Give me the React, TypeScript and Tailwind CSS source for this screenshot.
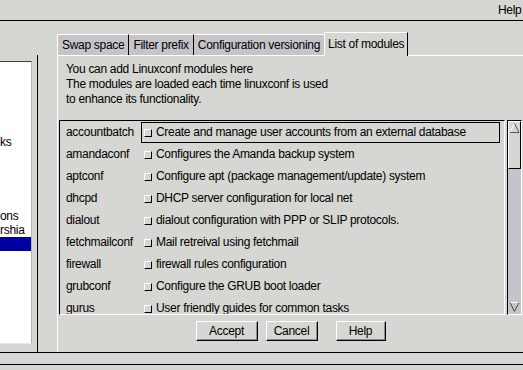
import React from 'react';

const MODULES = [
  { name: 'accountbatch', desc: 'Create and manage user accounts from an external database' },
  { name: 'amandaconf', desc: 'Configures the Amanda backup system' },
  { name: 'aptconf', desc: 'Configure apt (package management/update) system' },
  { name: 'dhcpd', desc: 'DHCP server configuration for local net' },
  { name: 'dialout', desc: 'dialout configuration with PPP or SLIP protocols.' },
  { name: 'fetchmailconf', desc: 'Mail retreival using fetchmail' },
  { name: 'firewall', desc: 'firewall rules configuration' },
  { name: 'grubconf', desc: 'Configure the GRUB boot loader' },
  { name: 'gurus', desc: 'User friendly guides for common tasks' },
];

const TABS = ['Swap space', 'Filter prefix', 'Configuration versioning'];

function Check() {
  return <span className="block w-[8px] h-[8px] shrink-0 bg-[#d6d6d2] border-t border-l border-white border-r border-b border-r-[#000] border-b-[#000]" />;
}

function Btn({ label, w, ml }: { label: string; w: string; ml: string }) {
  return (
    <button className={`${w} ${ml} h-[20px] bg-[#d6d6d2] border border-t-white border-l-white border-r-black border-b-black shadow-[inset_-1px_-1px_0_#8c8c8c] text-black flex items-center justify-center`}>
      {label}
    </button>
  );
}

export default function App() {
  return (
    <div className="w-[523px] h-[370px] overflow-hidden bg-[#d6d6d2] text-black text-[12px] leading-[15px] tracking-[-0.3px] font-['Liberation_Sans',Arial,sans-serif] flex flex-col">
      {/* menubar */}
      <div className="h-[21px] shrink-0 border-b border-black flex items-center pl-[498px] whitespace-nowrap">Help</div>

      <div className="h-[332px] shrink-0 border-b border-black flex">
        {/* left tree, scrolled */}
        <div className="w-[38px] shrink-0 mt-[34px] border-r border-black pt-[6px] pr-[5px] pb-[8px] flex flex-col">
          <div className="flex-1 bg-white border-t border-[#404040] border-r border-r-[#b4b4b4] border-b border-b-[#e8e8e8] pt-[73px] whitespace-nowrap overflow-hidden">
            <div className="h-[14px] leading-[14px]">ks</div>
            <div className="h-[60px]" />
            <div className="h-[14px] leading-[14px]">ons</div>
            <div className="h-[14px] leading-[14px]">rshia</div>
            <div className="h-[14px] bg-[#0000a0]" />
          </div>
        </div>

        {/* notebook */}
        <div className="ml-[19px] w-[466px] shrink-0 flex flex-col">
          <div className="h-[23px] mt-[11px] flex items-end whitespace-nowrap">
            {TABS.map((t, i) => (
              <div
                key={t}
                className={`h-[21px] px-[4px] flex items-center bg-[#c6c4c9] border-t border-white ${i === 0 ? 'border-l' : ''} ${i < 2 ? 'border-r border-r-black' : ''}`}
              >
                {t}
              </div>
            ))}
            <div className="h-[24px] -mb-[1px] px-[3px] pb-[1px] flex items-center bg-[#d6d6d2] border-t border-l border-white border-r border-r-black relative">
              List of modules
            </div>
          </div>

          <div className="flex-1 border-t border-l border-white flex flex-col">
            <div className="pl-[8px] pt-[6px] whitespace-nowrap">
              <div>You can add Linuxconf modules here</div>
              <div>The modules are loaded each time linuxconf is used</div>
              <div>to enhance its functionality.</div>
            </div>

            <div className="mt-[13px] ml-[1px] flex h-[195px]">
              <div className="w-[446px] border-t border-l border-black border-r border-b border-r-white border-b-white overflow-hidden whitespace-nowrap">
                {MODULES.map((m, i) => (
                  <div key={m.name} className="h-[22px] flex items-stretch">
                    <div className="w-[81px] shrink-0 pl-[6px] flex items-center">{m.name}</div>
                    <div className={`w-[359px] shrink-0 mt-[1px] pl-[2px] flex items-center gap-[4px] border ${i === 0 ? 'border-black' : 'border-transparent'}`}>
                      <Check />
                      <span>{m.desc}</span>
                    </div>
                  </div>
                ))}
              </div>

              <div className="ml-[2px] w-[15px] bg-[#c6c3ca] border-t border-l border-black border-r border-b border-r-white border-b-white flex flex-col justify-between">
                <div className="h-[48px] bg-[#d6d6d2] border-t border-l border-white border-r border-b border-r-black border-b-black flex justify-center pt-[1px]">
                  <svg width="11" height="10" viewBox="0 0 11 10">
                    <path d="M1 9.5 L5.5 0.5 L10 9.5" fill="none" stroke="#fff" />
                    <path d="M5.5 0.5 L10 9.5 L1 9.5" fill="none" stroke="#555" />
                  </svg>
                </div>
                <div className="h-[12px] flex justify-center items-start">
                  <svg width="11" height="10" viewBox="0 0 11 10">
                    <path d="M1 0.5 L10 0.5 L5.5 9.5" fill="none" stroke="#fff" />
                    <path d="M10 0.5 L5.5 9.5 L1 0.5" fill="none" stroke="#444" />
                  </svg>
                </div>
              </div>
            </div>

            <div className="mt-[6px] flex justify-center">
              <Btn label="Accept" w="w-[62px]" ml="ml-0" />
              <Btn label="Cancel" w="w-[52px]" ml="ml-[8px]" />
              <Btn label="Help" w="w-[50px]" ml="ml-[18px]" />
            </div>
          </div>
        </div>
      </div>

      <div className="mt-[11px] border-t border-black h-[6px] shrink-0" />
    </div>
  );
}
